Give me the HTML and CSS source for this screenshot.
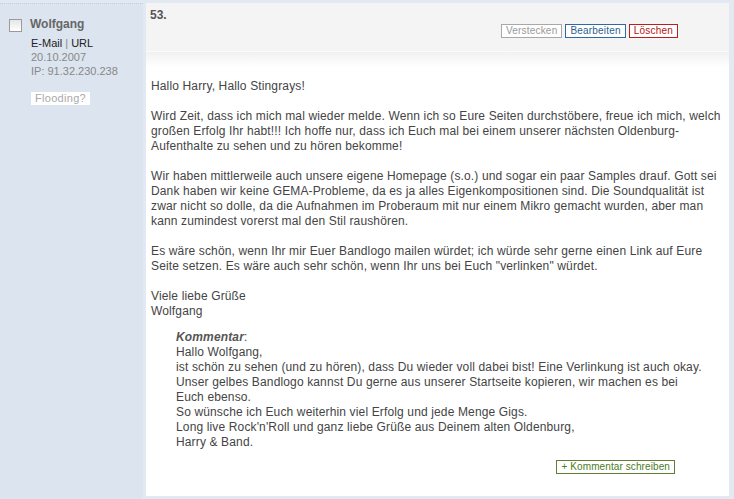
FILE: index.html
```html
<!DOCTYPE html>
<html lang="de">

<head>
    <meta charset="UTF-8" />
    <title>Gästebuch - Eintrag 53</title>
    <link rel="stylesheet" href="styles.css">
</head>

<body>

    <div class="entry">

        <!-- Autor -->
        <div class="author">
            <div class="author-name">
                <span class="check"></span>
                <span class="name">Wolfgang</span>
            </div>
            <div class="author-info">
                <div class="links"><a href="#">E-Mail</a> <span class="sep">|</span> <a href="#">URL</a></div>
                <div class="meta">20.10.2007</div>
                <div class="meta">IP: 91.32.230.238</div>
                <span class="btn-flood">Flooding?</span>
            </div>
        </div>

        <!-- Beitrag -->
        <div class="post">
            <div class="post-head">
                <div class="number">53.</div>
                <div class="actions">
                    <span class="btn btn-hide">Verstecken</span>
                    <span class="btn btn-edit">Bearbeiten</span>
                    <span class="btn btn-delete">Löschen</span>
                </div>
            </div>

            <div class="post-body">
                <div class="text">
                    Hallo Harry, Hallo Stingrays!<br><br>
                    Wird Zeit, dass ich mich mal wieder melde. Wenn ich so Eure Seiten durchstöbere, freue ich mich, welch großen Erfolg Ihr habt!!! Ich hoffe nur, dass ich Euch mal bei einem unserer nächsten Oldenburg-Aufenthalte zu sehen und zu hören bekomme!<br><br>
                    Wir haben mittlerweile auch unsere eigene Homepage (s.o.) und sogar ein paar Samples drauf. Gott sei Dank haben wir keine GEMA-Probleme, da es ja alles Eigenkompositionen sind. Die Soundqualität ist zwar nicht so dolle, da die Aufnahmen im Proberaum mit nur einem Mikro gemacht wurden, aber man kann zumindest vorerst mal den Stil raushören.<br><br>
                    Es wäre schön, wenn Ihr mir Euer Bandlogo mailen würdet; ich würde sehr gerne einen Link auf Eure Seite setzen. Es wäre auch sehr schön, wenn Ihr uns bei Euch "verlinken" würdet.<br><br>
                    Viele liebe Grüße<br>
                    Wolfgang
                </div>

                <div class="comment">
                    <span class="comment-label">Kommentar</span>:<br>
                    Hallo Wolfgang,<br>
                    ist schön zu sehen (und zu hören), dass Du wieder voll dabei bist! Eine Verlinkung ist auch okay.<br>
                    Unser gelbes Bandlogo kannst Du gerne aus unserer Startseite kopieren, wir machen es bei Euch ebenso.<br>
                    So wünsche ich Euch weiterhin viel Erfolg und jede Menge Gigs.<br>
                    Long live Rock'n'Roll und ganz liebe Grüße aus Deinem alten Oldenburg,<br>
                    Harry &amp; Band.
                </div>

                <div class="comment-actions">
                    <span class="btn btn-comment">+ Kommentar schreiben</span>
                </div>
            </div>
        </div>

    </div>

</body>

</html>
```

FILE: styles.css
```css
html,
body {
    margin: 0;
    padding: 0;
    background-color: #e3e9f2;
    color: #444;
    font-family: "Liberation Sans", Arial, sans-serif;
    font-size: 12px;
    width: 100vw;
    height: 100vh;
    overflow: hidden;
}

.entry {
    display: flex;
    padding-top: 3px;
    height: 496px;
}

/* Autor-Spalte */
.author {
    width: 143px;
    box-sizing: border-box;
    background-color: #dce4ef;
    border-top: 1px dotted #c3cddb;
    padding: 13px 0 0 9px;
}

.author-name {
    display: flex;
    align-items: flex-start;
    gap: 8px;
}

.check {
    display: block;
    width: 11px;
    height: 11px;
    margin-top: 2px;
    border: 1px solid #9a9a9a;
    background: linear-gradient(#e6e6e6, #ffffff);
}

.name {
    font-weight: bold;
    color: #666;
    line-height: 15px;
}

.author-info {
    margin: 4px 0 0 22px;
    font-size: 11px;
    line-height: 14px;
}

.links a {
    color: #222;
    text-decoration: none;
}

.links .sep {
    color: #888;
}

.meta {
    color: #888;
}

.btn-flood {
    display: inline-block;
    margin-top: 14px;
    padding: 0 4px;
    line-height: 13px;
    letter-spacing: 0.3px;
    background-color: #fff;
    color: #aaa;
}

/* Beitrag */
.post {
    flex: 1;
    margin: 0 5px 3px 3px;
    background-color: #fff;
    display: flex;
    flex-direction: column;
}

.post-head {
    height: 49px;
    box-sizing: border-box;
    background-color: #f4f4f4;
    padding: 5px 51px 0 4px;
    border-bottom: 1px solid #fbfbfb;
}

.number {
    font-weight: bold;
    color: #555;
    line-height: 15px;
}

.actions {
    display: flex;
    justify-content: flex-end;
    gap: 3px;
    margin-top: 1px;
}

.btn {
    display: inline-block;
    font-size: 10px;
    line-height: 12px;
    letter-spacing: 0.2px;
    padding: 0 4px;
    border: 1px solid;
    background-color: #fff;
}

.btn-hide {
    color: #999;
    border-color: #a8a8a8;
}

.btn-edit {
    color: #2d5f8f;
    border-color: #2f69a0;
}

.btn-delete {
    color: #b01515;
    border-color: #b82020;
}

.post-body {
    flex: 1;
    background: linear-gradient(#f1f1f1, #ffffff 15px);
    padding: 27px 6px 0 5px;
    line-height: 15px;
    letter-spacing: 0.14px;
}

.comment {
    margin: 11px 20px 0 25px;
}

.comment-label {
    font-weight: bold;
    font-style: italic;
    color: #555;
}

.comment-actions {
    display: flex;
    justify-content: flex-end;
    margin: 10px 48px 0 0;
}

.btn-comment {
    color: #4c7a26;
    border-color: #5f7f35;
    padding: 0 4px;
    letter-spacing: 0.1px;
}
```
